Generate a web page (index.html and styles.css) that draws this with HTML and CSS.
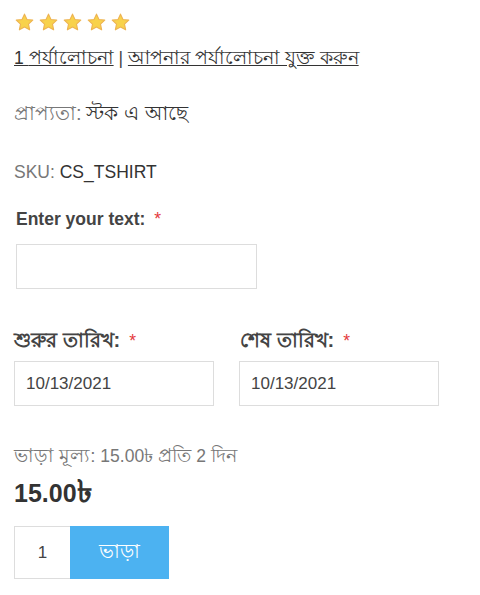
FILE: index.html
```html
<!DOCTYPE html>
<html>
<head>
<meta charset="utf-8">
<link rel="stylesheet" href="styles.css">
</head>
<body>
<div class="product">
  <div class="stars">
    <svg class="star" viewBox="0 0 20 20"><path d="M10 1.2l2.6 5.6 6.1.7-4.5 4.2 1.2 6-5.4-3-5.4 3 1.2-6L1.3 7.5l6.1-.7z"/></svg>
    <svg class="star" viewBox="0 0 20 20"><path d="M10 1.2l2.6 5.6 6.1.7-4.5 4.2 1.2 6-5.4-3-5.4 3 1.2-6L1.3 7.5l6.1-.7z"/></svg>
    <svg class="star" viewBox="0 0 20 20"><path d="M10 1.2l2.6 5.6 6.1.7-4.5 4.2 1.2 6-5.4-3-5.4 3 1.2-6L1.3 7.5l6.1-.7z"/></svg>
    <svg class="star" viewBox="0 0 20 20"><path d="M10 1.2l2.6 5.6 6.1.7-4.5 4.2 1.2 6-5.4-3-5.4 3 1.2-6L1.3 7.5l6.1-.7z"/></svg>
    <svg class="star" viewBox="0 0 20 20"><path d="M10 1.2l2.6 5.6 6.1.7-4.5 4.2 1.2 6-5.4-3-5.4 3 1.2-6L1.3 7.5l6.1-.7z"/></svg>
  </div>
  <div class="reviews"><a href="#">1 <span class="bn">পর্যালোচনা</span></a> | <a href="#"><span class="bn">আপনার পর্যালোচনা যুক্ত করুন</span></a></div>
  <div class="avail"><span class="lbl bn">প্রাপ্যতা:</span> <span class="val bn">স্টক এ আছে</span></div>
  <div class="sku"><span class="lbl">SKU:</span> <span class="val">CS_TSHIRT</span></div>
  <div class="text-field">
    <label class="field-label">Enter your text: <span class="req">*</span></label>
    <input class="text-input" type="text">
  </div>
  <div class="dates">
    <div class="date-col">
      <label class="field-label"><span class="bn">শুরুর তারিখ:</span> <span class="req">*</span></label>
      <input class="date-input" type="text" value="10/13/2021">
    </div>
    <div class="date-col">
      <label class="field-label second"><span class="bn">শেষ তারিখ:</span> <span class="req">*</span></label>
      <input class="date-input" type="text" value="10/13/2021">
    </div>
  </div>
  <div class="rental"><span class="bn">ভাড়া মূল্য:</span> 15.00<span class="bn">৳ প্রতি</span> 2 <span class="bn">দিন</span></div>
  <div class="price">15.00<span class="bn">৳</span></div>
  <div class="cart">
    <input class="qty" type="text" value="1">
    <button class="rent-btn"><span class="bn">ভাড়া</span></button>
  </div>
</div>
</body>
</html>
```
FILE: styles.css
```css
html, body {
  margin: 0;
  padding: 0;
  background: #fff;
}
body {
  font-family: "Liberation Sans", Arial, sans-serif;
  font-size: 17.5px;
  color: #444;
}
.bn {
  font-size: 1.15em;
}
.product {
  padding-left: 14px;
}
.stars {
  display: flex;
  gap: 5px;
  margin-top: 12px;
  height: 20px;
  align-items: center;
  padding-left: 1px;
}
.star {
  width: 19px;
  height: 19px;
}
.star path {
  fill: #f8d24b;
  stroke: #eeb452;
  stroke-width: 1.2;
  stroke-linejoin: round;
}
.reviews {
  margin-top: 14px;
  height: 24px;
  line-height: 24px;
  color: #444;
}
.reviews .bn {
  font-size: 1.08em;
}
.reviews a {
  color: #333;
  text-decoration: underline;
}
.avail {
  margin-top: 31px;
  height: 24px;
  line-height: 24px;
}
.sku {
  margin-top: 35px;
  height: 24px;
  line-height: 24px;
}
.lbl {
  color: #777;
}
.val {
  color: #333;
}
.text-field {
  margin-top: 23px;
  padding-left: 2px;
}
.field-label {
  display: block;
  font-weight: bold;
  height: 24px;
  line-height: 24px;
  color: #444;
}
.req {
  color: #e4393c;
  font-weight: normal;
  margin-left: 4px;
}
.text-input {
  display: block;
  margin-top: 13px;
  width: 241px;
  height: 45px;
  box-sizing: border-box;
  border: 1px solid #ddd;
  padding: 0 10px;
  font: inherit;
}
.dates {
  display: flex;
  margin-top: 39px;
}
.date-col {
  width: 225px;
}
.field-label.second {
  padding-left: 1px;
}
.date-input {
  display: block;
  margin-top: 9px;
  width: 200px;
  height: 45px;
  box-sizing: border-box;
  border: 1px solid #ddd;
  padding: 0 11px;
  font-family: "Liberation Sans", Arial, sans-serif;
  font-size: 17px;
  color: #444;
}
.rental {
  margin-top: 38px;
  height: 24px;
  line-height: 24px;
  color: #777;
}
.rental .bn {
  font-size: 1.08em;
}
.price {
  margin-top: 10px;
  height: 28px;
  line-height: 28px;
  font-size: 25px;
  font-weight: bold;
  color: #333;
}
.price .bn {
  font-size: 1.25em;
}
.cart {
  display: flex;
  margin-top: 20px;
}
.qty {
  width: 56px;
  height: 53px;
  box-sizing: border-box;
  border: 1px solid #ddd;
  border-right: none;
  text-align: center;
  font-family: "Liberation Sans", Arial, sans-serif;
  font-size: 17px;
  color: #444;
  padding: 0;
}
.rent-btn {
  width: 99px;
  height: 53px;
  border: none;
  background: #4cb2f1;
  color: #fff;
  font-family: "Liberation Sans", Arial, sans-serif;
  font-size: 17.5px;
  padding: 0;
}
```
